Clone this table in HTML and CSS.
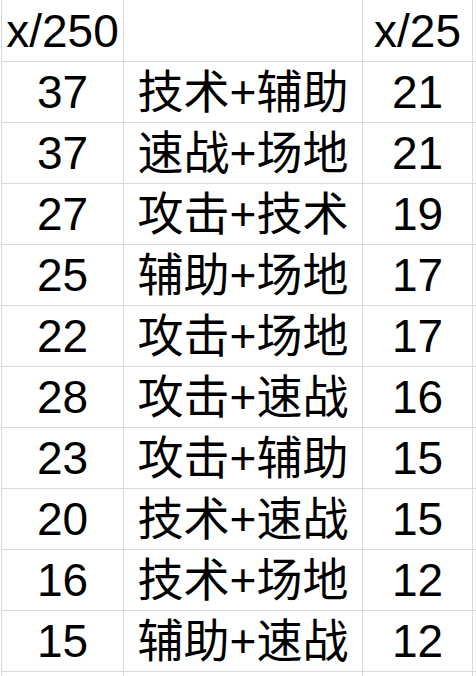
FILE: index.html
```html
<!DOCTYPE html>
<html lang="zh">
<head>
<meta charset="utf-8">
<link rel="stylesheet" href="styles.css">
</head>
<body>
<div class="sheet">
  <div class="cell">x/250</div><div class="cell"></div><div class="cell">x/25</div><div class="cell"></div>
  <div class="cell">37</div><div class="cell">技术+辅助</div><div class="cell">21</div><div class="cell"></div>
  <div class="cell">37</div><div class="cell">速战+场地</div><div class="cell">21</div><div class="cell"></div>
  <div class="cell">27</div><div class="cell">攻击+技术</div><div class="cell">19</div><div class="cell"></div>
  <div class="cell">25</div><div class="cell">辅助+场地</div><div class="cell">17</div><div class="cell"></div>
  <div class="cell">22</div><div class="cell">攻击+场地</div><div class="cell">17</div><div class="cell"></div>
  <div class="cell">28</div><div class="cell">攻击+速战</div><div class="cell">16</div><div class="cell"></div>
  <div class="cell">23</div><div class="cell">攻击+辅助</div><div class="cell">15</div><div class="cell"></div>
  <div class="cell">20</div><div class="cell">技术+速战</div><div class="cell">15</div><div class="cell"></div>
  <div class="cell">16</div><div class="cell">技术+场地</div><div class="cell">12</div><div class="cell"></div>
  <div class="cell">15</div><div class="cell">辅助+速战</div><div class="cell">12</div><div class="cell"></div>
  <div class="cell"></div><div class="cell"></div><div class="cell"></div><div class="cell"></div>
</div>
</body>
</html>
```
FILE: styles.css
```css
html, body {
  margin: 0;
  padding: 0;
  background: #ffffff;
  overflow: hidden;
  width: 476px;
  height: 676px;
}
.sheet {
  margin-left: 1px;
  padding-left: 1px;
  display: grid;
  grid-template-columns: 121px 238px 109px 3px;
  grid-template-rows: 61px repeat(10, 60px) 4px;
  gap: 1px;
  background: #d9d9d9;
  width: max-content;
  font-family: "Liberation Sans", "Noto Sans CJK SC", sans-serif;
  font-size: 46px;
  color: #000000;
}
.cell {
  background: #ffffff;
  display: flex;
  align-items: center;
  justify-content: center;
  line-height: 1;
  white-space: nowrap;
  overflow: hidden;
}
```
